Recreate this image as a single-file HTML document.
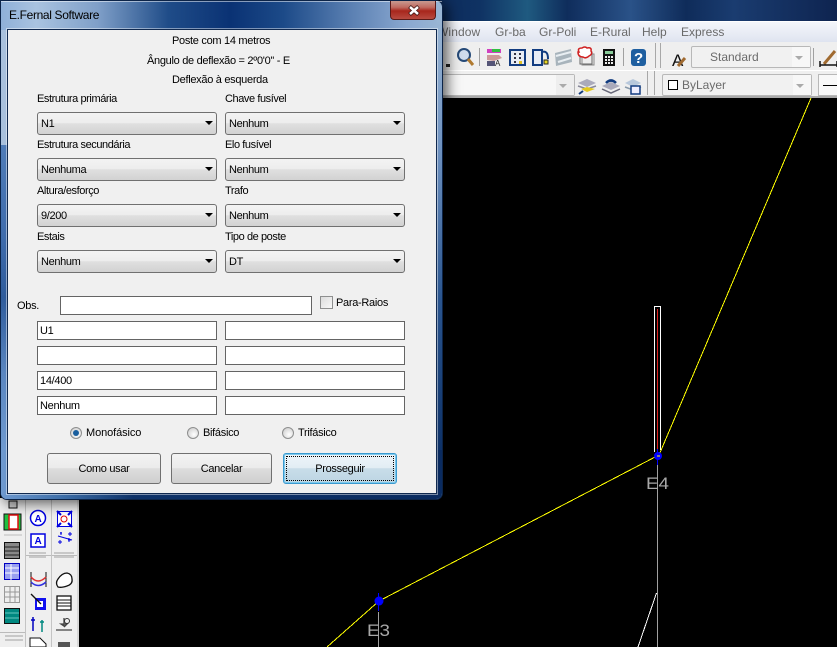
<!DOCTYPE html>
<html><head><meta charset="utf-8">
<style>
html,body{margin:0;padding:0;background:#000;}
#p{position:relative;width:837px;height:647px;overflow:hidden;background:#000;font-family:"Liberation Sans",sans-serif;font-size:11px;color:#000;}
#p div,#p span.a{position:absolute;box-sizing:border-box;}
.t{white-space:nowrap;line-height:14px;height:14px;letter-spacing:-.3px;}
.l{letter-spacing:-.42px;}
.c{background:linear-gradient(#f3f3f3 0,#ededed 47%,#e0e0e0 50%,#d2d2d2 100%);border:1px solid #707070;border-radius:3px;height:23px;width:180px;line-height:22px;padding-left:3px;white-space:nowrap;letter-spacing:-.35px;}
.c i{position:absolute;right:3px;top:8px;width:0;height:0;border-left:4px solid transparent;border-right:4px solid transparent;border-top:4px solid #000;}
.b{background:#fff;border:1px solid #646464;height:19px;width:180px;line-height:18px;padding-left:2px;white-space:nowrap;letter-spacing:-.3px;}
.btn{background:linear-gradient(#f3f3f3 0,#ebebeb 48%,#dddddd 50%,#cfcfcf 100%);border:1px solid #707070;border-radius:3px;height:31px;line-height:30px;text-align:center;letter-spacing:-.3px;}
.r{width:12px;height:12px;border-radius:50%;border:1px solid #8e8f8f;background:radial-gradient(circle at 60% 65%,#fff,#d8d8d8 70%,#bbb);}
.m{color:#6a6a6a;font-size:12px;line-height:14px;white-space:nowrap;top:25px;height:14px;}
.sep{background:#a0a0a0;width:1px;}
.grip{width:1px;background:#a8a8a8;}
</style></head><body>
<div id="p">
<!-- desktop background -->
<div style="left:440px;top:0;width:397px;height:22px;background:linear-gradient(90deg,#0d2c5c 0,#0f3263 10%,#1f5a80 22%,#0f2d5c 32%,#2a5288 48%,#0f2c5a 62%,#1a3c70 74%,#0e2450 100%);"></div>
<!-- menu -->
<div style="left:430px;top:21px;width:407px;height:21px;background:linear-gradient(#f4f6fb,#dfe4f0);border-top:1px solid #fff;"></div>
<div class="m" style="left:437px;letter-spacing:.1px;">Window</div>
<div class="m" style="left:495px;">Gr-ba</div>
<div class="m" style="left:539px;">Gr-Poli</div>
<div class="m" style="left:590px;">E-Rural</div>
<div class="m" style="left:642px;">Help</div>
<div class="m" style="left:681px;">Express</div>
<!-- toolbars -->
<div style="left:440px;top:42px;width:397px;height:56px;background:#efefef;"></div>
<div style="left:440px;top:70px;width:397px;height:1px;background:#fff;"></div>
<div style="left:440px;top:96px;width:397px;height:2px;background:#a9a9a9;"></div>
<div class="sep" style="left:479px;top:48px;height:18px;"></div>
<div class="sep" style="left:623px;top:48px;height:18px;"></div>
<div class="grip" style="left:655px;top:43px;height:25px;"></div>
<div class="grip" style="left:660px;top:43px;height:25px;"></div>
<div class="grip" style="left:647px;top:71px;height:24px;"></div>
<div class="grip" style="left:654px;top:71px;height:24px;"></div>
<div class="sep" style="left:813px;top:48px;height:18px;"></div>
<!-- toolbar combos -->
<div style="left:691px;top:46px;width:120px;height:22px;background:#f1f1f1;border:1px solid #b8b8b8;border-radius:2px;color:#6b6b6b;font-size:12px;line-height:20px;padding-left:18px;">Standard<span class="a" style="right:0;top:0;width:18px;height:20px;background:#f7f7f7;"></span><span class="a" style="right:7px;top:9px;width:0;height:0;border-left:4px solid transparent;border-right:4px solid transparent;border-top:4px solid #aaa;"></span></div>
<div style="left:440px;top:74px;width:135px;height:22px;background:#f7f7f7;border:1px solid #b8b8b8;border-left:0;border-radius:2px;"><span class="a" style="right:0;top:0;width:18px;height:20px;background:#eeeeee;"></span><span class="a" style="right:7px;top:9px;width:0;height:0;border-left:4px solid transparent;border-right:4px solid transparent;border-top:4px solid #aaa;"></span></div>
<div style="left:662px;top:74px;width:150px;height:22px;background:#f1f1f1;border:1px solid #b8b8b8;border-radius:2px;color:#6b6b6b;font-size:12px;line-height:20px;padding-left:19px;"><span class="a" style="right:0;top:0;width:18px;height:20px;background:#f7f7f7;"></span>ByLayer<span class="a" style="left:5px;top:5px;width:10px;height:10px;border:1px solid #000;background:#fff;"></span><span class="a" style="right:7px;top:9px;width:0;height:0;border-left:4px solid transparent;border-right:4px solid transparent;border-top:4px solid #aaa;"></span></div>
<div style="left:818px;top:74px;width:19px;height:22px;background:#f8f8f8;border:1px solid #b8b8b8;border-right:0;"><span class="a" style="left:4px;top:10px;width:15px;height:1px;background:#000;"></span></div>
<!-- toolbar icons -->
<svg style="position:absolute;left:440px;top:42px" width="397" height="56" viewBox="0 0 397 56">
 <circle cx="24" cy="13" r="6" fill="#cfdcec" stroke="#264a78" stroke-width="2"/><path d="M28 17l5 6" stroke="#b07a30" stroke-width="3"/>
 <rect x="6" y="22" width="4" height="3" fill="#222"/>
 <rect x="47" y="7" width="14" height="4" fill="#d040c0"/><rect x="52" y="7" width="8" height="3" fill="#30c040"/><path d="M47 13h12l3 3-8 3-7-1z" fill="#c99"/><rect x="47" y="19" width="8" height="5" fill="#557"/><text x="55" y="24" font-size="8" fill="#222" font-family="Liberation Sans">A</text>
 <rect x="70" y="8" width="15" height="15" fill="#e8ecf4" stroke="#123c80" stroke-width="2"/><path d="M74 11h2v2h-2zM79 11h2v2h-2zM74 15h2v2h-2zM79 15h2v2h-2zM74 19h2v2h-2z" fill="#334"/><rect x="79" y="19" width="3" height="3" fill="#e0c020"/>
 <rect x="93" y="8" width="9" height="15" fill="#e8ecf4" stroke="#123c80" stroke-width="2"/><path d="M102 10q6-2 6 7" fill="none" stroke="#123c80" stroke-width="2"/><rect x="104" y="18" width="4" height="4" fill="#e8d820" stroke="#222"/>
 <path d="M115 11l16-4 1 13-16 4z" fill="#a8b4bc"/><path d="M116 14l15-4M118 20l13-4" stroke="#e8eef2" stroke-width="2"/>
 <rect x="140" y="10" width="12" height="12" fill="#eee" stroke="#666"/><rect x="142" y="12" width="12" height="11" fill="none" stroke="#888"/><path d="M139 10q-2-4 3-4 3-2 5 0 5-1 4 3 2 3-2 5-3 3-6 1-5 0-5-5z" fill="#fff" stroke="#d02020" stroke-width="1.500"/>
 <rect x="163" y="7" width="12" height="17" fill="#111"/><rect x="165" y="9" width="8" height="3" fill="#8c9"/><path d="M165 14h2v2h-2zM168 14h2v2h-2zM171 14h2v2h-2zM165 17h2v2h-2zM168 17h2v2h-2zM171 17h2v2h-2zM165 20h2v2h-2zM168 20h2v2h-2zM171 20h2v2h-2z" fill="#eee"/>
 <rect x="191" y="7" width="15" height="17" rx="3" fill="#1f5fa0"/><text x="194" y="21" font-size="15" font-weight="bold" fill="#fff" font-family="Liberation Sans">?</text>
 <text x="232" y="24" font-size="17" fill="#111" font-family="Liberation Sans">A</text><path d="M238 24l7-8" stroke="#a06a30" stroke-width="3"/>
 <path d="M384 22l11-13" stroke="#a06a30" stroke-width="3"/><path d="M380 19v6M397 19v6M380 23h17" stroke="#111" stroke-width="1.500"/>
 <path d="M138 41l9-4 9 4-9 4z" fill="#aab"/><path d="M138 44l9 3 9-3" fill="none" stroke="#889" stroke-width="1.500"/><path d="M141 47l6-2 8 2-8 3z" fill="#e2c820"/><path d="M139 52l4-3" stroke="#123c80" stroke-width="2"/>
 <path d="M162 44l9-4 9 4-9 4z" fill="#aab"/><path d="M162 47l9 4 9-4" fill="none" stroke="#667" stroke-width="1.500"/><path d="M166 41q5-5 10 0" fill="none" stroke="#123c80" stroke-width="2.500"/>
 <path d="M185 41l8-4 8 4-8 4z" fill="#b8c8dc"/><path d="M185 45l8 3 8-3" fill="none" stroke="#89a" stroke-width="1.500"/><rect x="191" y="44" width="9" height="8" fill="#eef" stroke="#123c80" stroke-width="1.500"/>
</svg>
<!-- left toolbar -->
<div style="left:0;top:498px;width:77px;height:149px;background:#efefef;"></div>
<div style="left:77px;top:498px;width:2px;height:149px;background:#d8d8d8;"></div>
<div style="left:25px;top:498px;width:1px;height:149px;background:#c4c4c4;"></div>
<div style="left:51px;top:498px;width:1px;height:149px;background:#c4c4c4;"></div>
<div style="left:26px;top:555px;width:25px;height:1px;background:#bbb;"></div>
<div style="left:52px;top:555px;width:25px;height:1px;background:#bbb;"></div>
<div style="left:0;top:632px;width:25px;height:1px;background:#bbb;"></div>
<svg style="position:absolute;left:0;top:490px" width="78" height="157" viewBox="0 0 78 157">
 <rect x="9" y="11" width="8" height="7" fill="#ccc" stroke="#111"/>
 <rect x="4" y="24" width="17" height="16" fill="#20c040" stroke="#111"/><rect x="9" y="25" width="9" height="14" fill="#fff" stroke="#e01010" stroke-width="1.500"/>
 <path d="M4 45h18" stroke="#bbb"/>
 <path d="M4.500 52.500h15v16h-15z" fill="#888" stroke="#111"/><path d="M5 57h14M5 61h14M5 65h14" stroke="#222"/>
 <path d="M4.500 73.500h15v16h-15z" fill="#99a0f0" stroke="#0000c0"/><path d="M5 78h14M5 83h14M11 74v16" stroke="#fff"/>
 <path d="M4.500 96.500h15v16h-15z" fill="#efefef" stroke="#999"/><path d="M5 102h14M5 107h14M10 97v15M15 97v15" stroke="#999"/>
 <path d="M4.500 118.500h15v15h-15z" fill="#008880" stroke="#111"/><path d="M5 123h14M5 128h14" stroke="#66c8c0"/>
 <circle cx="38" cy="28" r="7.500" fill="#fff" stroke="#0000e0" stroke-width="1.500"/><text x="34.500" y="32" font-size="10" font-weight="bold" fill="#0000e0" font-family="Liberation Sans">A</text>
 <rect x="31" y="44" width="14" height="13" fill="#fff" stroke="#0000e0" stroke-width="1.500"/><text x="34.500" y="54" font-size="10" font-weight="bold" fill="#0000e0" font-family="Liberation Sans">A</text>
 <path d="M57.500 21.500h14v15h-14z" fill="#fff" stroke="#0000e0"/><circle cx="64" cy="29" r="3" fill="none" stroke="#e00000"/><path d="M57 21l4 4M72 21l-4 4M57 37l4-4M72 37l-4-4" stroke="#0000e0" stroke-width="2"/>
 <path d="M58 52h4M60 50v4M68 44h4M70 42v4M60 43h2M61 42v3M68 50h3M69 48v4M58 46l14 4" stroke="#0000e0" fill="none"/>
 <path d="M29 63h17M29 67h17M54 63h20M54 67h20" stroke="#bbb" stroke-width="1.500"/>
 <path d="M31 82v15M46 82v15" stroke="#111"/><path d="M31 87q7 8 15 0" fill="none" stroke="#e03030" stroke-width="1.500"/><path d="M31 92q7 7 15 0" fill="none" stroke="#3030e0" stroke-width="1.500"/>
 <path d="M58 89q4-6 9-6 5 1 5 6 1 5-5 7-6 2-9 1-3-4 0-8z" fill="#fff" stroke="#111" stroke-width="1.300"/>
 <rect x="35" y="108" width="11" height="12" fill="#1010f0"/><rect x="37" y="111" width="6" height="6" fill="#fff"/><path d="M31 104l10 10" stroke="#111" stroke-width="1.300"/>
 <rect x="57" y="106" width="14" height="14" fill="#fff" stroke="#111" stroke-width="1.300"/><path d="M57 110h14M57 113h14M57 116h14" stroke="#111"/>
 <path d="M33 127v14M31 130h4" stroke="#0000c0" stroke-width="1.500"/><path d="M42 130v12M40 132h4" stroke="#008880" stroke-width="1.500"/>
 <path d="M56 140h16M64 128v8l-3-2h6l-3 3" stroke="#444" fill="none" stroke-width="1.300"/><circle cx="67" cy="131" r="2.500" fill="none" stroke="#333"/>
 <path d="M30 148h10l6 6v3H30z" fill="#fff" stroke="#111"/>
 <rect x="58" y="152" width="12" height="5" fill="#555"/>
 <path d="M5 146h18M5 150h18" stroke="#bbb" stroke-width="1.500"/>
</svg>
<!-- CAD drawing -->
<svg style="position:absolute;left:0;top:0" width="837" height="647" viewBox="0 0 837 647">
 <path d="M378.500 612V647" stroke="#a0a0a0"/>
 <path d="M657.500 460V647" stroke="#a0a0a0"/>
 <path d="M656.500 593L638 647" stroke="#fff" fill="none" shape-rendering="crispEdges"/>
 <path d="M811 98L659 455" stroke="#ffff00" fill="none" shape-rendering="crispEdges"/>
 <path d="M657 456L379 601L327 647" stroke="#ffff00" fill="none" shape-rendering="crispEdges"/>
 <path d="M654.500 452V306.500H660.500V450" fill="none" stroke="#fff"/>
 <path d="M657.500 309V452" stroke="#e02020"/>
 <circle cx="658" cy="456" r="4" fill="#0000ff"/><path d="M657.500 449V465" stroke="#0000ff"/>
 <circle cx="379" cy="601" r="4.500" fill="#0000ff"/><path d="M378.500 593V611" stroke="#0000ff"/>
 <path d="M657 456h3" stroke="#ffff00"/>
 <text x="646" y="489" font-size="17" fill="#a8a8a8" font-family="Liberation Sans" textLength="23" lengthAdjust="spacingAndGlyphs">E4</text>
 <text x="367" y="636" font-size="17" fill="#a8a8a8" font-family="Liberation Sans" textLength="23" lengthAdjust="spacingAndGlyphs">E3</text>
</svg>
<!-- dialog window -->
<div style="left:0;top:0;width:443px;height:500px;border-radius:0 7px 7px 7px;border:1px solid #0c2448;box-shadow:4px 3px 14px rgba(0,0,0,.65);background:linear-gradient(90deg,#8fb0d8 0,#a9c3e0 8%,#7f9fc8 22%,#1f4c88 38%,#0a3274 52%,#1c4a88 64%,#5d82b4 80%,#8aa8d0 92%,#9ab6d4 100%);"></div>
<div style="left:1px;top:440px;width:441px;height:59px;border-radius:0 0 6px 6px;background:linear-gradient(90deg,#6f9ad0 0,#3d6ea8 14%,#0e3268 30%,#0a2b60 100%);"></div>
<div style="left:1px;top:30px;width:6px;height:115px;background:#a8c0dc;"></div>
<div style="left:1px;top:145px;width:6px;height:305px;background:linear-gradient(#4f7cb8,#3f6cac 30%,#2f5c9c 50%,#5a86c0 75%,#6f9ad0);"></div>
<div style="left:437px;top:20px;width:5px;height:430px;background:linear-gradient(#9ab6d4,#6f92c0 30%,#2a558f 65%,#0e3268);"></div>
<div style="left:1px;top:1px;width:441px;height:1px;background:rgba(255,255,255,.5);"></div>
<div class="t" style="left:9px;top:8px;font-size:12px;color:#000;letter-spacing:-.35px;">E.Fernal Software</div>
<!-- close -->
<div style="left:390px;top:1px;width:46px;height:19px;border-radius:0 0 4px 4px;border:1px solid #5a1a18;border-top:0;background:linear-gradient(#c89a90 0,#c06a60 35%,#a8261c 55%,#b84a40 100%);"></div>
<svg style="position:absolute;left:407px;top:5px" width="14" height="11" viewBox="0 0 14 11"><path d="M2.500 1.500L11.500 9.500M11.500 1.500L2.500 9.500" stroke="#3a1210" stroke-width="4"/><path d="M3 2L11 9M11 2L3 9" stroke="#fff" stroke-width="2.500"/></svg>
<!-- client -->
<div style="left:7px;top:29px;width:430px;height:465px;background:#f0f0f0;border:1px solid #10294f;box-shadow:0 0 0 1px rgba(255,255,255,.45);"></div>
<div class="t" style="left:172px;top:34px;">Poste com 14 metros</div>
<div class="t" style="left:147px;top:54px;">Ângulo de deflexão = 2º0'0'' - E</div>
<div class="t" style="left:172px;top:73px;">Deflexão à esquerda</div>

<div class="t l" style="left:37px;top:92px;">Estrutura primária</div>
<div class="t l" style="left:225px;top:92px;">Chave fusível</div>
<div class="c" style="left:37px;top:112px;">N1<i></i></div>
<div class="c" style="left:225px;top:112px;">Nenhum<i></i></div>
<div class="t l" style="left:37px;top:138px;">Estrutura secundária</div>
<div class="t l" style="left:225px;top:138px;">Elo fusível</div>
<div class="c" style="left:37px;top:158px;">Nenhuma<i></i></div>
<div class="c" style="left:225px;top:158px;">Nenhum<i></i></div>
<div class="t l" style="left:37px;top:184px;">Altura/esforço</div>
<div class="t l" style="left:225px;top:184px;">Trafo</div>
<div class="c" style="left:37px;top:204px;">9/200<i></i></div>
<div class="c" style="left:225px;top:204px;">Nenhum<i></i></div>
<div class="t l" style="left:37px;top:230px;">Estais</div>
<div class="t l" style="left:225px;top:230px;">Tipo de poste</div>
<div class="c" style="left:37px;top:250px;">Nenhum<i></i></div>
<div class="c" style="left:225px;top:250px;">DT<i></i></div>

<div class="t" style="left:17px;top:299px;">Obs.</div>
<div class="b" style="left:60px;top:296px;width:252px;"></div>
<div style="left:320px;top:296px;width:13px;height:13px;border:1px solid #8e8f8f;background:linear-gradient(135deg,#dcdcdc,#f8f8f8);"></div>
<div class="t" style="left:336px;top:296px;">Para-Raios</div>

<div class="b" style="left:37px;top:321px;">U1</div><div class="b" style="left:225px;top:321px;"></div>
<div class="b" style="left:37px;top:346px;"></div><div class="b" style="left:225px;top:346px;"></div>
<div class="b" style="left:37px;top:371px;">14/400</div><div class="b" style="left:225px;top:371px;"></div>
<div class="b" style="left:37px;top:396px;">Nenhum</div><div class="b" style="left:225px;top:396px;"></div>

<div class="r" style="left:70px;top:427px;"></div>
<div style="left:73px;top:430px;width:6px;height:6px;border-radius:50%;background:#1a5f9e;"></div>
<div class="t" style="left:86px;top:426px;letter-spacing:-.1px;">Monofásico</div>
<div class="r" style="left:187px;top:427px;"></div>
<div class="t" style="left:203px;top:426px;">Bifásico</div>
<div class="r" style="left:282px;top:427px;"></div>
<div class="t" style="left:298px;top:426px;">Trifásico</div>

<div class="btn" style="left:47px;top:453px;width:114px;">Como usar</div>
<div class="btn" style="left:171px;top:453px;width:101px;">Cancelar</div>
<div class="btn" style="left:283px;top:453px;width:114px;border-color:#3a9ad0;background:linear-gradient(#eef5fa 0,#e2edf4 48%,#c8dde9 50%,#bdd5e3 100%);box-shadow:inset 0 0 0 1px #7cc8ec;">Prosseguir<span class="a" style="left:2px;top:2px;right:2px;bottom:2px;border:1px dotted #000;"></span></div>
</div>
</body></html>
